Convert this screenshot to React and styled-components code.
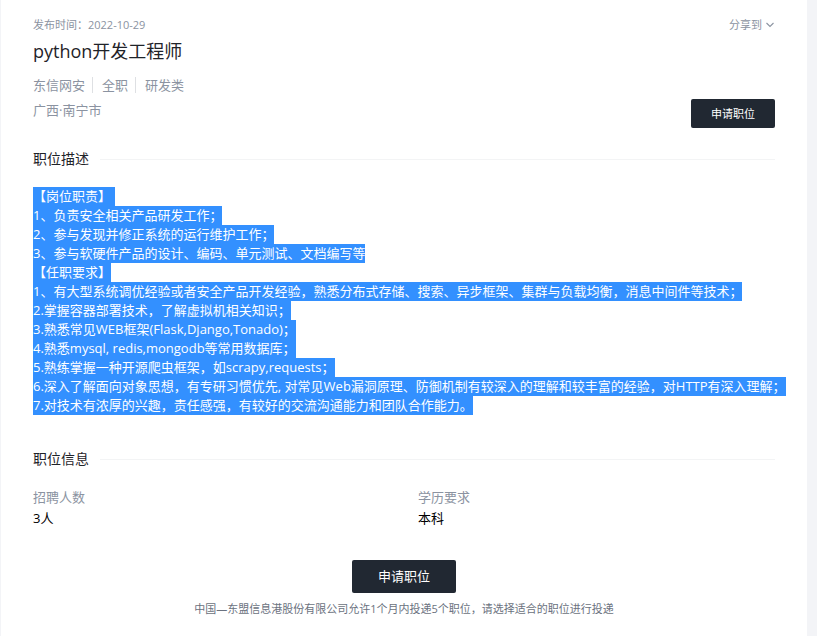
import React from "react";
import styled, { createGlobalStyle } from "styled-components";

const GlobalStyle = createGlobalStyle`
  * { box-sizing: border-box; }
  body {
    margin: 0;
    background: #f3f4f7;
    color: #1f2329;
    font-family: "Open Sans", "Noto Sans CJK SC", sans-serif;
    font-size: 13px;
    line-height: 20px;
  }
  h1, h2, p, dl, dd { margin: 0; font-weight: 400; }
  button { font-family: inherit; cursor: pointer; }
`;

const Card = styled.main`
  min-height: 100vh;
  margin: 0 10px 0 1px;
  padding: 15px 32px 16px;
  background: #fff;
`;

const Row = styled.div`
  display: flex;
  align-items: ${(p) => p.$align || "center"};
  justify-content: space-between;
`;

const PublishTime = styled.p`
  font-size: 11px;
  color: #8b93a1;
`;

const ShareButton = styled.button`
  display: flex;
  align-items: center;
  gap: 4px;
  padding: 0 1px 0 0;
  border: 0;
  background: none;
  font-size: 11px;
  line-height: 20px;
  color: #8b93a1;
`;

const Title = styled.h1`
  margin-top: 2px;
  font-size: 18px;
  line-height: 28px;
`;

const Summary = styled.div`
  padding-bottom: 8px;
`;

const Tags = styled.ul`
  display: flex;
  margin: 10px 0 0;
  padding: 0;
  list-style: none;
  color: #8b93a1;
`;

const Tag = styled.li`
  display: flex;
  align-items: center;

  & + &::before {
    content: "";
    width: 1px;
    height: 16px;
    margin: 0 9px 0 7px;
    background: #dee0e3;
  }
`;

const Location = styled.p`
  margin-top: 5px;
  color: #8b93a1;
`;

const ApplyButton = styled.button`
  padding: ${(p) => (p.$large ? "8px 26px" : "6px 20px")};
  border: 0;
  border-radius: 2px;
  background: #212832;
  color: #fff;
  font-size: ${(p) => (p.$large ? 13 : 11)}px;
  line-height: 17px;
`;

const SectionTitle = styled.h2`
  display: flex;
  align-items: center;
  gap: 11px;
  margin-top: ${(p) => p.$top}px;
  font-size: 14px;
  line-height: 20px;

  &::after {
    content: "";
    flex: 1;
    height: 1px;
    background: #f3f4f5;
  }
`;

const Description = styled.div`
  margin: 18px -24px 0 0;
`;

const Line = styled.p`
  width: fit-content;
  padding-right: ${(p) => p.$tail}px;
  background: #3390ff;
  color: #fff;
  line-height: 19px;
`;

const InfoList = styled.dl`
  display: grid;
  grid-template-columns: 1fr 1fr;
  column-gap: 28px;
  margin-top: 18px;
`;

const InfoLabel = styled.dt`
  color: #8b93a1;
`;

const InfoValue = styled.dd`
  margin-top: 1px;
  color: #000;
`;

const Footer = styled.footer`
  display: flex;
  flex-direction: column;
  align-items: center;
  gap: 6px;
  margin-top: 32px;
  text-align: center;
`;

const Notice = styled.p`
  font-size: 11px;
  color: #6b7280;
`;

const tags = ["东信网安", "全职", "研发类"];

const lines = [
  ["【岗位职责】", 4],
  ["1、负责安全相关产品研发工作；", 0],
  ["2、参与发现并修正系统的运行维护工作；", 0],
  ["3、参与软硬件产品的设计、编码、单元测试、文档编写等", 0],
  ["【任职要求】", 0],
  ["1、有大型系统调优经验或者安全产品开发经验，熟悉分布式存储、搜索、异步框架、集群与负载均衡，消息中间件等技术；", 0],
  ["2.掌握容器部署技术，了解虚拟机相关知识；", 0],
  ["3.熟悉常见WEB框架(Flask,Django,Tonado)；", 0],
  ["4.熟悉mysql, redis,mongodb等常用数据库；", 0],
  ["5.熟练掌握一种开源爬虫框架，如scrapy,requests；", 0],
  ["6.深入了解面向对象思想，有专研习惯优先, 对常见Web漏洞原理、防御机制有较深入的理解和较丰富的经验，对HTTP有深入理解；", 0],
  ["7.对技术有浓厚的兴趣，责任感强，有较好的交流沟通能力和团队合作能力。", 0],
];

const info = [
  ["招聘人数", "3人"],
  ["学历要求", "本科"],
];

function ChevronDown() {
  return (
    <svg width="8" height="6" viewBox="0 0 8 6" fill="none" stroke="currentColor" strokeWidth="1.1" aria-hidden="true">
      <path d="M0.5 1L4 4.5L7.5 1" />
    </svg>
  );
}

export default function App() {
  return (
    <>
      <GlobalStyle />
      <Card>
        <Row>
          <PublishTime>发布时间：2022-10-29</PublishTime>
          <ShareButton type="button">
            分享到
            <ChevronDown />
          </ShareButton>
        </Row>
        <Title>python开发工程师</Title>
        <Row $align="flex-end">
          <Summary>
            <Tags>
              {tags.map((tag) => (
                <Tag key={tag}>{tag}</Tag>
              ))}
            </Tags>
            <Location>广西·南宁市</Location>
          </Summary>
          <ApplyButton type="button">申请职位</ApplyButton>
        </Row>

        <SectionTitle $top={21}>职位描述</SectionTitle>
        <Description>
          {lines.map(([text, tail]) => (
            <Line key={text} $tail={tail}>
              {text}
            </Line>
          ))}
        </Description>

        <SectionTitle $top={34}>职位信息</SectionTitle>
        <InfoList>
          {info.map(([label, value]) => (
            <div key={label}>
              <InfoLabel>{label}</InfoLabel>
              <InfoValue>{value}</InfoValue>
            </div>
          ))}
        </InfoList>

        <Footer>
          <ApplyButton type="button" $large>
            申请职位
          </ApplyButton>
          <Notice>中国—东盟信息港股份有限公司允许1个月内投递5个职位，请选择适合的职位进行投递</Notice>
        </Footer>
      </Card>
    </>
  );
}
